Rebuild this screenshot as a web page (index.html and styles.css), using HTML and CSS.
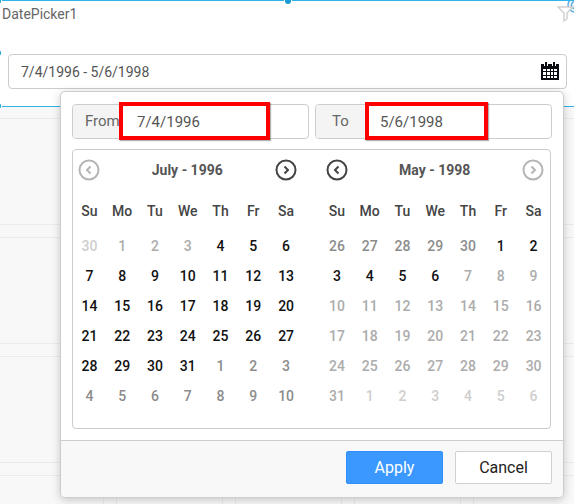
FILE: index.html
```html
<!DOCTYPE html>
<html lang="en">
<head>
<meta charset="utf-8">
<meta name="viewport" content="width=device-width, initial-scale=1">
<title>DatePicker1</title>
<link rel="stylesheet" href="styles.css">
</head>
<body>
<section class="widget">
  <header class="widget-head">
    <label class="widget-title" for="range">DatePicker1</label>
    <svg class="widget-tools" viewBox="0 0 18 24" aria-hidden="true">
      <circle cx="19" cy="4" r="7" fill="#eef6fc" stroke="#5aa9dd" stroke-width="1.400"/>
      <circle cx="19" cy="4" r="3.600" fill="none" stroke="#5aa9dd" stroke-width="1.400"/>
      <path d="M2 6h14.500l-5.500 6v6l-3 2v-8z" fill="#fff" stroke="#cfcfd1" stroke-width="1.400"/>
    </svg>
  </header>
  <div class="field">
    <input id="range" class="field-input" type="text" value="7/4/1996 - 5/6/1998">
    <button class="field-button" type="button" aria-label="Open calendar">
      <svg viewBox="0 0 18 19" aria-hidden="true">
        <path d="M0 2h18v16H0z" fill="#0b0b12"/>
        <path d="M2 7h3v2H2zM6 7h3v2H6zM10 7h2v2h-2zM13 7h3v2h-3zM2 10h3v3H2zM6 10h3v3H6zM10 10h2v3h-2zM13 10h3v3h-3zM2 14h3v2H2zM6 14h3v2H6zM10 14h2v2h-2zM13 14h3v2h-3z" fill="#fff"/>
        <path d="M3.500 1v3M6.500 1v3M11.500 1v3M14.500 1v3" stroke="#fff" stroke-width="1"/>
        <path d="M5 0v4M13 0v4" stroke="#0b0b12" stroke-width="2"/>
      </svg>
    </button>
  </div>
  <i class="handle handle-tl"></i><i class="handle handle-t"></i>
  <i class="handle handle-l"></i><i class="handle handle-bl"></i>

  <div class="popup">
    <div class="popup-body">
      <div class="ranges">
        <div class="range">
          <label class="range-label" for="from">From</label>
          <input class="range-input" id="from" type="text" value="7/4/1996">
          <span class="mark mark-from"></span>
        </div>
        <div class="range">
          <label class="range-label" for="to">To</label>
          <input class="range-input" id="to" type="text" value="5/6/1998">
          <span class="mark mark-to"></span>
        </div>
      </div>
      <div class="calendars">
        <div class="calendar">
          <div class="month">
            <button class="nav" type="button" disabled aria-label="Previous month"><svg viewBox="0 0 22 22"><circle cx="11" cy="11" r="9.500"/><path d="M12.500 7.500L9 11l3.500 3.500"/></svg></button>
            <span>July - 1996</span>
            <button class="nav" type="button" aria-label="Next month"><svg viewBox="0 0 22 22"><circle cx="11" cy="11" r="9.500"/><path d="M9.500 7.500L13 11l-3.500 3.500"/></svg></button>
          </div>
          <table class="days">
            <thead><tr><th>Su</th><th>Mo</th><th>Tu</th><th>We</th><th>Th</th><th>Fr</th><th>Sa</th></tr></thead>
            <tbody>
              <tr><td class="faint">30</td><td class="off">1</td><td class="off">2</td><td class="off">3</td><td>4</td><td>5</td><td>6</td></tr>
              <tr><td>7</td><td>8</td><td>9</td><td>10</td><td>11</td><td>12</td><td>13</td></tr>
              <tr><td>14</td><td>15</td><td>16</td><td>17</td><td>18</td><td>19</td><td>20</td></tr>
              <tr><td>21</td><td>22</td><td>23</td><td>24</td><td>25</td><td>26</td><td>27</td></tr>
              <tr><td>28</td><td>29</td><td>30</td><td>31</td><td class="other">1</td><td class="other">2</td><td class="other">3</td></tr>
              <tr><td class="other">4</td><td class="other">5</td><td class="other">6</td><td class="other">7</td><td class="other">8</td><td class="other">9</td><td class="other">10</td></tr>
            </tbody>
          </table>
        </div>
        <div class="calendar">
          <div class="month">
            <button class="nav" type="button" aria-label="Previous month"><svg viewBox="0 0 22 22"><circle cx="11" cy="11" r="9.500"/><path d="M12.500 7.500L9 11l3.500 3.500"/></svg></button>
            <span>May - 1998</span>
            <button class="nav" type="button" disabled aria-label="Next month"><svg viewBox="0 0 22 22"><circle cx="11" cy="11" r="9.500"/><path d="M9.500 7.500L13 11l-3.500 3.500"/></svg></button>
          </div>
          <table class="days">
            <thead><tr><th>Su</th><th>Mo</th><th>Tu</th><th>We</th><th>Th</th><th>Fr</th><th>Sa</th></tr></thead>
            <tbody>
              <tr><td class="other">26</td><td class="other">27</td><td class="other">28</td><td class="other">29</td><td class="other">30</td><td>1</td><td>2</td></tr>
              <tr><td>3</td><td>4</td><td>5</td><td>6</td><td class="off">7</td><td class="off">8</td><td class="off">9</td></tr>
              <tr><td class="off">10</td><td class="off">11</td><td class="off">12</td><td class="off">13</td><td class="off">14</td><td class="off">15</td><td class="off">16</td></tr>
              <tr><td class="off">17</td><td class="off">18</td><td class="off">19</td><td class="off">20</td><td class="off">21</td><td class="off">22</td><td class="off">23</td></tr>
              <tr><td class="off">24</td><td class="off">25</td><td class="off">26</td><td class="off">27</td><td class="off">28</td><td class="off">29</td><td class="off">30</td></tr>
              <tr><td class="off">31</td><td class="faint">1</td><td class="faint">2</td><td class="faint">3</td><td class="faint">4</td><td class="faint">5</td><td class="faint">6</td></tr>
            </tbody>
          </table>
        </div>
      </div>
    </div>
    <footer class="popup-foot">
      <button class="button button-primary" type="button">Apply</button>
      <button class="button" type="button">Cancel</button>
    </footer>
  </div>
</section>
</body>
</html>
```
FILE: styles.css
```css
* {
  box-sizing: border-box;
}

html {
  min-height: 100%;
  /* Dashboard tiles: a 119px pitch with a 12px gutter */
  background-color: #f8f8f8;
  background-image:
    linear-gradient(#ebebeb 1px, transparent 1px, transparent 106px, #ebebeb 106px, #ebebeb 107px, transparent 107px),
    linear-gradient(90deg, #ebebeb 1px, transparent 1px, transparent 106px, #ebebeb 106px, #ebebeb 107px, transparent 107px);
  background-size: 119px 119px;
  background-position: -3px 118px;
}

body {
  margin: 0;
  overflow: hidden;
  min-height: 100vh;
  font-family: Roboto, "Liberation Sans", sans-serif;
  font-size: 14px;
  color: #555;
}

input,
button {
  font: inherit;
  color: inherit;
}

.widget {
  position: relative;
  height: 107px;
  background: #fff;
  border: solid #2fb4ea;
  border-width: 1px 0;
}

.widget-head {
  display: flex;
  justify-content: space-between;
  align-items: flex-start;
  height: 53px;
  padding-left: 2px;
}

.widget-title {
  line-height: 26px;
  color: #666;
}

.widget-tools {
  width: 18px;
  height: 24px;
}

.field {
  display: flex;
  align-items: center;
  height: 35px;
  margin: 0 7px 0 8px;
  padding: 0 7px 0 12px;
  border: 1px solid #ccc;
  border-radius: 4px;
}

.field-input {
  flex: 1;
  min-width: 0;
  padding: 0;
  border: 0;
  outline: 0;
  background: none;
}

.field-button {
  display: flex;
  padding: 0;
  border: 0;
  background: none;
}

.field-button svg {
  width: 18px;
  height: 19px;
}

.handle {
  position: absolute;
  width: 6px;
  height: 6px;
  border-radius: 50%;
  background: #159bd9;
  box-shadow: 0 0 0 1px #fff;
}

.handle-tl { left: -5px; top: -3px; }
.handle-t { left: calc(50% - 2px); top: -3px; }
.handle-l { left: -5px; top: 49px; }
.handle-bl { left: -5px; bottom: -3px; }

.popup {
  position: absolute;
  z-index: 1;
  top: 90px;
  left: 60px;
  right: 10px;
  background: #fff;
  border: 1px solid #ccc;
  border-radius: 5px;
  box-shadow: 0 2px 10px rgba(0, 0, 0, 0.2);
}

.popup-body {
  padding: 12px 11px 11px;
}

.ranges {
  display: grid;
  grid-template-columns: repeat(2, minmax(0, 1fr));
  gap: 6px;
  margin-bottom: 10px;
}

.range {
  position: relative;
  display: flex;
  height: 35px;
  border: 1px solid #ccc;
  border-radius: 4px;
  font-size: 15px;
}

.range-label {
  flex: none;
  width: 49px;
  padding-left: 12px;
  line-height: 32px;
  background: #f4f4f4;
  border-radius: 3px 0 0 3px;
  color: #666;
}

.range:last-child .range-label {
  padding-left: 16px;
}

.range-input {
  flex: 1;
  min-width: 0;
  padding: 0 0 0 15px;
  border: 0;
  outline: 0;
  background: none;
}

/* Highlight frames drawn over the two inputs */
.mark {
  position: absolute;
  top: -3px;
  bottom: -2px;
  left: 46px;
  border: 4px solid #f00;
  box-shadow: 1px 1px 1px rgba(0, 0, 0, 0.3);
  pointer-events: none;
}

.mark-from { right: 38px; }
.mark-to { left: 49px; right: 63px; }

.calendars {
  display: grid;
  grid-template-columns: repeat(2, minmax(0, 1fr));
  gap: 18px;
  margin-right: 1px;
  padding-bottom: 17px;
  border: 1px solid #ccc;
  border-radius: 4px;
}

.month {
  display: flex;
  justify-content: space-between;
  align-items: center;
  height: 40px;
  padding: 0 6px 0 5px;
  font-weight: 700;
}

.nav {
  display: flex;
  padding: 0;
  border: 0;
  background: none;
  color: #444;
}

.nav:disabled {
  color: #b5b5b5;
}

.nav svg {
  width: 22px;
  height: 22px;
  fill: none;
  stroke: currentColor;
  stroke-width: 2;
}

.days {
  width: 100%;
  table-layout: fixed;
  border-collapse: collapse;
  text-align: center;
}

.days th,
.days td {
  height: 30px;
  padding: 0;
  font-size: 14px;
  font-weight: 500;
}

.days th {
  height: 41px;
  color: #444;
}

.days td { color: #111; }
.days .other { color: #8c8c8c; }
.days .off { color: #acacac; }
.days .faint { color: #cecece; }

.popup-foot {
  display: flex;
  justify-content: flex-end;
  gap: 12px;
  padding: 10px 11px 13px;
  background: #f8f8f8;
  border-top: 1px solid #ccc;
  border-radius: 0 0 4px 4px;
}

.button {
  width: 97px;
  height: 33px;
  padding: 0;
  border: 1px solid #d0d0d0;
  border-radius: 2px;
  background: #fff;
  font-size: 16px;
  color: #222;
}

.button-primary {
  border-color: #2f8ffa;
  background: #3a98ff;
  color: #fff;
}
```
